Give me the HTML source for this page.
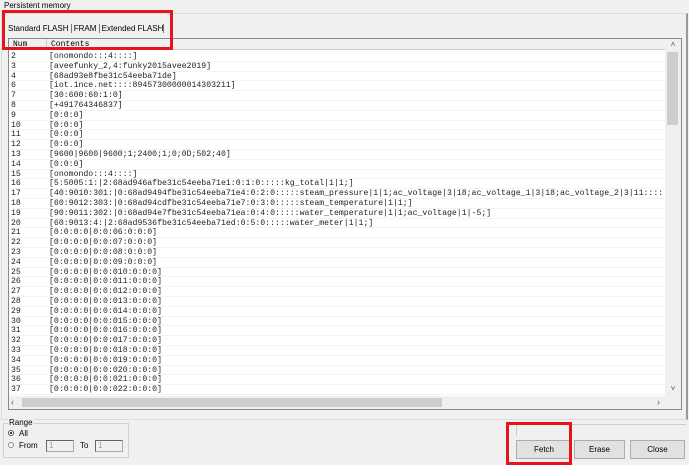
<!DOCTYPE html>
<html><head><style>
*{margin:0;padding:0;box-sizing:border-box}
body{width:689px;height:463px;background:#f0f0f0;font-family:"Liberation Sans",sans-serif;font-size:8px;color:#000;position:relative;overflow:hidden}
.abs{position:absolute}
.rows{position:absolute;left:11px;top:52px;width:654px;height:343px;overflow:hidden;font-family:"Liberation Mono",monospace;font-size:8.2px;line-height:9.8px;white-space:nowrap;color:#222}
.rows div{height:9.8px;border-bottom:1px solid #f3f3f3}
.rows span{display:inline-block;width:38px}
.btn{position:absolute;height:19px;background:#e1e1e1;border:1px solid #adadad;font-size:8px;text-align:center;line-height:17px}
</style></head><body>
<div class="abs" style="left:4px;top:1px;font-size:8px">Persistent memory</div>
<div class="abs" style="left:1px;top:13px;width:687px;height:407px;border:1px solid #dcdcdc;border-right:2px solid #999"></div>
<div class="abs" style="left:8px;top:24px;font-size:8px">Standard FLASH <span style="border-left:1px solid #777;padding-left:2px">FRAM</span> <span style="border-left:1px solid #777;padding-left:2px">Extended FLASH</span> <span style="border-left:1px solid #777"></span></div>
<div class="abs" style="left:8px;top:38px;width:674px;height:372px;border:1px solid #888;background:#fff"></div>
<div class="abs" style="left:9px;top:39px;width:656px;height:11px;background:#f0f0f0;border-bottom:1px solid #ccc;font-family:'Liberation Mono',monospace;font-size:8px;line-height:11px"><span style="padding-left:4px">Num</span><span style="position:absolute;left:10px;top:0;border-left:1px solid #ccc;height:11px;margin-left:27px"></span><span style="position:absolute;left:42px">Contents</span></div>
<div class="rows">
<div><span>2</span>[onomondo:::4::::]</div>
<div><span>3</span>[aveefunky_2,4:funky2015avee2019]</div>
<div><span>4</span>[68ad93e8fbe31c54eeba71de]</div>
<div><span>6</span>[iot.1nce.net::::89457300000014303211]</div>
<div><span>7</span>[30:600:60:1:0]</div>
<div><span>8</span>[+491764346837]</div>
<div><span>9</span>[0:0:0]</div>
<div><span>10</span>[0:0:0]</div>
<div><span>11</span>[0:0:0]</div>
<div><span>12</span>[0:0:0]</div>
<div><span>13</span>[9600|9600|9600;1;2400;1;0;0D;502;40]</div>
<div><span>14</span>[0:0:0]</div>
<div><span>15</span>[onomondo:::4::::]</div>
<div><span>16</span>[5:5005:1:|2:68ad946afbe31c54eeba71e1:0:1:0:::::kg_total|1|1;]</div>
<div><span>17</span>[40:9010:301:|0:68ad9494fbe31c54eeba71e4:0:2:0:::::steam_pressure|1|1;ac_voltage|3|18;ac_voltage_1|3|18;ac_voltage_2|3|11:::::</div>
<div><span>18</span>[60:9012:303:|0:68ad94cdfbe31c54eeba71e7:0:3:0:::::steam_temperature|1|1;]</div>
<div><span>19</span>[90:9011:302:|0:68ad94e7fbe31c54eeba71ea:0:4:0:::::water_temperature|1|1;ac_voltage|1|-5;]</div>
<div><span>20</span>[60:9013:4:|2:68ad9536fbe31c54eeba71ed:0:5:0:::::water_meter|1|1;]</div>
<div><span>21</span>[0:0:0:0|0:0:06:0:0:0]</div>
<div><span>22</span>[0:0:0:0|0:0:07:0:0:0]</div>
<div><span>23</span>[0:0:0:0|0:0:08:0:0:0]</div>
<div><span>24</span>[0:0:0:0|0:0:09:0:0:0]</div>
<div><span>25</span>[0:0:0:0|0:0:010:0:0:0]</div>
<div><span>26</span>[0:0:0:0|0:0:011:0:0:0]</div>
<div><span>27</span>[0:0:0:0|0:0:012:0:0:0]</div>
<div><span>28</span>[0:0:0:0|0:0:013:0:0:0]</div>
<div><span>29</span>[0:0:0:0|0:0:014:0:0:0]</div>
<div><span>30</span>[0:0:0:0|0:0:015:0:0:0]</div>
<div><span>31</span>[0:0:0:0|0:0:016:0:0:0]</div>
<div><span>32</span>[0:0:0:0|0:0:017:0:0:0]</div>
<div><span>33</span>[0:0:0:0|0:0:018:0:0:0]</div>
<div><span>34</span>[0:0:0:0|0:0:019:0:0:0]</div>
<div><span>35</span>[0:0:0:0|0:0:020:0:0:0]</div>
<div><span>36</span>[0:0:0:0|0:0:021:0:0:0]</div>
<div><span>37</span>[0:0:0:0|0:0:022:0:0:0]</div>
</div>
<div class="abs" style="left:665px;top:39px;width:16px;height:358px;background:#f0f0f0"></div>
<div class="abs" style="left:665px;top:40px;width:16px;height:10px;font-size:8px;text-align:center;color:#555">&#708;</div>
<div class="abs" style="left:667px;top:52px;width:11px;height:73px;background:#cdcdcd"></div>
<div class="abs" style="left:665px;top:384px;width:16px;height:10px;font-size:8px;text-align:center;color:#555">&#709;</div>
<div class="abs" style="left:9px;top:396px;width:656px;height:13px;background:#f0f0f0"></div>
<div class="abs" style="left:11px;top:397px;font-size:9px;color:#555">&lsaquo;</div>
<div class="abs" style="left:22px;top:398px;width:420px;height:9px;background:#cdcdcd"></div>
<div class="abs" style="left:657px;top:397px;font-size:9px;color:#555">&rsaquo;</div>
<div class="abs" style="left:665px;top:396px;width:16px;height:13px;background:#f0f0f0"></div>
<div class="abs" style="left:2px;top:10px;width:171px;height:40px;border:3px solid #e8141c"></div>
<div class="abs" style="left:3px;top:423px;width:126px;height:35px;border:1px solid #d0d0d0"></div>
<div class="abs" style="left:8px;top:418px;background:#f0f0f0;padding:0 1px">Range</div>
<div class="abs" style="left:8px;top:430px;width:6px;height:6px;border-radius:50%;border:1px solid #555;background:#fff"><div style="width:2px;height:2px;margin:1px;background:#000;border-radius:50%"></div></div>
<div class="abs" style="left:19px;top:429px">All</div>
<div class="abs" style="left:8px;top:442px;width:6px;height:6px;border-radius:50%;border:1px solid #888;background:#fff"></div>
<div class="abs" style="left:19px;top:441px">From</div>
<div class="abs" style="left:46px;top:440px;width:28px;height:12px;border:1px solid #aaa;border-top-color:#666;border-left-color:#666;background:#f0f0f0;color:#999;padding-left:2px;font-size:8px">1</div>
<div class="abs" style="left:80px;top:441px">To</div>
<div class="abs" style="left:95px;top:440px;width:28px;height:12px;border:1px solid #aaa;border-top-color:#666;border-left-color:#666;background:#f0f0f0;color:#999;padding-left:2px;font-size:8px">1</div>
<div class="abs" style="left:516px;top:424px;width:170px;height:12px;border-top:1px solid #ccc;border-left:1px solid #ccc"></div>
<div class="btn" style="left:516px;top:440px;width:56px">Fetch</div>
<div class="btn" style="left:574px;top:440px;width:51px">Erase</div>
<div class="btn" style="left:630px;top:440px;width:55px">Close</div>
<div class="abs" style="left:506px;top:422px;width:66px;height:43px;border:3px solid #e8141c"></div>
</body></html>
